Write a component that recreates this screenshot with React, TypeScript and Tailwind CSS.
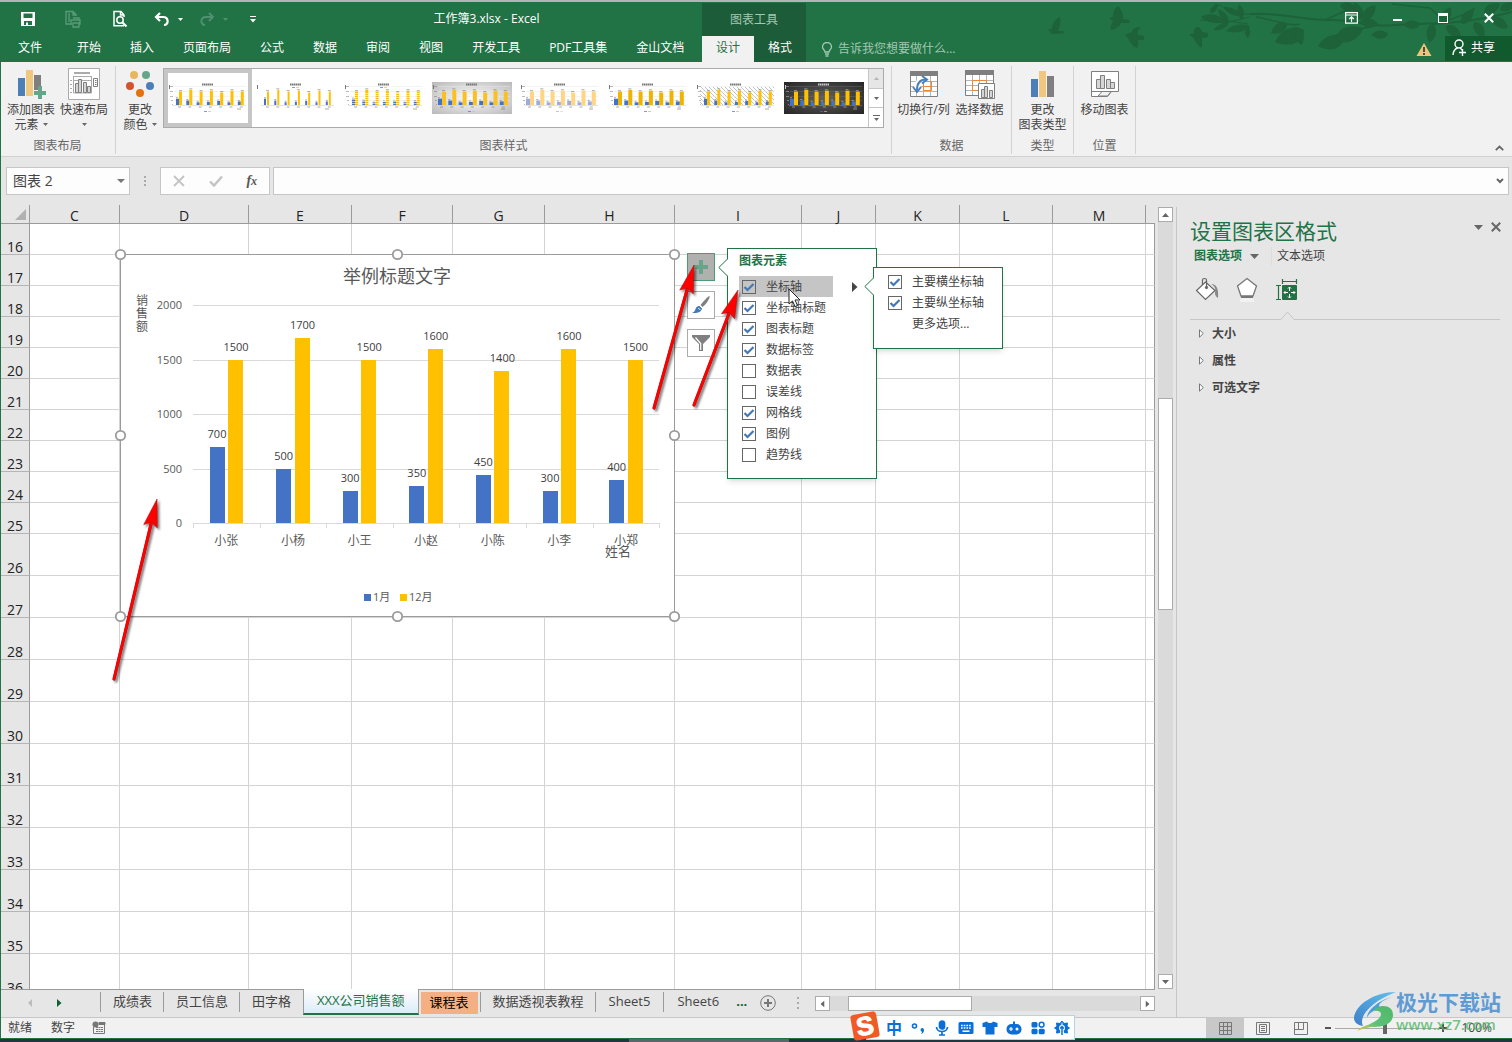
import type { ReactNode } from 'react'

const tabs = ['开始', '插入', '页面布局', '公式', '数据', '审阅', '视图', '开发工具', 'PDF工具集', '金山文档']

const columns = [
  { name: 'C', width: 90 },
  { name: 'D', width: 129 },
  { name: 'E', width: 103 },
  { name: 'F', width: 101 },
  { name: 'G', width: 92 },
  { name: 'H', width: 130 },
  { name: 'I', width: 127 },
  { name: 'J', width: 74 },
  { name: 'K', width: 84 },
  { name: 'L', width: 93 },
  { name: 'M', width: 93 },
]

const rows = Array.from({ length: 21 }, (_, i) => i + 16)

const sales = [
  { name: '小张', jan: 700, dec: 1500 },
  { name: '小杨', jan: 500, dec: 1700 },
  { name: '小王', jan: 300, dec: 1500 },
  { name: '小赵', jan: 350, dec: 1600 },
  { name: '小陈', jan: 450, dec: 1400 },
  { name: '小李', jan: 300, dec: 1600 },
  { name: '小郑', jan: 400, dec: 1500 },
]

const elements = [
  { label: '坐标轴', on: true },
  { label: '坐标轴标题', on: true },
  { label: '图表标题', on: true },
  { label: '数据标签', on: true },
  { label: '数据表', on: false },
  { label: '误差线', on: false },
  { label: '网格线', on: true },
  { label: '图例', on: true },
  { label: '趋势线', on: false },
]

function Caret({ className = 'text-[#666]' }: { className?: string }) {
  return (
    <svg width="5" height="3" viewBox="0 0 5 3" className={`shrink-0 ${className}`}>
      <path d="M0 0h5L2.5 3z" fill="currentColor" />
    </svg>
  )
}

/* ---------- title bar ---------- */

// x, y, rotation, scale of each leaf along the right-hand branches
const leaves = [
  [1287, 23, 150, 0.9], [1304, 30, 160, 1.5], [1296, 27, 75, 0.9], [1344, 38, 165, 1.3],
  [1336, 40, -20, 1.4], [1340, 6, 10, 0.8], [1362, 20, -110, 0.9], [1364, 20, -50, 0.9], [1360, 22, 10, 0.9],
  [1388, 34, 180, 0.8], [1420, 24, 180, 0.8], [1432, 24, 100, 0.9], [1442, 24, -60, 0.9], [1446, 26, 40, 0.9],
  [1462, 24, -50, 0.9], [1474, 22, 60, 0.9], [1484, 14, -30, 0.9], [1492, 18, 35, 0.9], [1500, 10, -20, 0.8],
]

function TitleArt() {
  return (
    <svg className="pointer-events-none absolute right-0 top-0" width="472" height="60" viewBox="1040 2 472 60" fill="#1d6239">
      <g transform="translate(1040 0)">
        <path d="M20 17C15 19 12 24 12 29H8L12 34H17L24 33L23 31H18C20 26 21 22 20 17z" />
        <path d="M78 6C74 9 73 13 73 17L69 18L73 21C71 25 70 28 71 30C76 29 80 26 81 23H90L89 20L83 19C83 14 82 10 78 6z" />
        <path d="M101 27C96 27 92 29 92 32L85 35L88 38C90 43 94 47 97 48C99 45 98 42 98 40H104V36L98 35C97 32 98 29 101 27z" />
        <path d="M157 27C154 27 154 31 154 33L149 35L154 38C155 42 158 46 162 48C162 44 162 41 162 38L168 37V33L162 32C161 29 160 27 157 27z" />
        <path d="M161 17C168 12 178 14 188 22C178 24 168 24 161 17zM178 9C186 12 190 18 188 22C183 20 178 15 178 9zM170 13C170 8 173 5 178 4C178 9 175 13 170 13z" />
        <path d="M183 7C190 6 198 10 202 16C194 17 187 13 183 7zM199 4C205 9 205 15 202 20C197 16 196 9 199 4zM173 30C178 25 183 22 189 22C187 28 180 31 173 30z" />
        <path d="M186 31C192 24 202 23 210 26C206 32 195 34 186 31zM207 26C211 29 211 34 208 38C204 34 204 30 207 26z" />
      </g>
      <g fill="none" stroke="#1d6239">
        <path d="M1214 4L1222 6M1200 20L1228 22L1250 17M1228 21L1248 24M1243 14H1256" />
        <path d="M1250 14C1280 12 1300 20 1330 20S1370 28 1395 25S1450 28 1512 12" strokeWidth="2" />
        <path d="M1256 17C1275 20 1290 27 1300 24M1325 20L1356 6M1330 38C1345 30 1360 28 1372 27M1392 4L1430 8L1445 22M1428 28C1440 20 1460 20 1475 8" strokeWidth="1.500" />
      </g>
      {leaves.map(([x, y, r, s], i) => (
        <path key={i} transform={`translate(${x} ${y}) rotate(${r}) scale(${s})`} d="M0 0C4 -8 13 -8 21 -1C14 6 5 6 0 0z" />
      ))}
    </svg>
  )
}

function QuickAccess() {
  return (
    <div className="flex w-[271px] shrink-0 items-center pl-5 text-white">
      <button aria-label="保存" className="mr-7">
        <svg width="16" height="16" viewBox="0 0 16 16">
          <path d="M1 1h14v14H1z" fill="currentColor" />
          <path d="M3.500 2.500h9V7h-9zM4 10h8v4H4z" fill="#217346" />
          <path d="M6 11.500h2V14H6z" fill="currentColor" />
        </svg>
      </button>
      <button aria-label="快速打印" className="mr-[30px] text-[#5b9a77]">
        <svg width="18" height="18" viewBox="0 0 18 18" fill="none" stroke="currentColor" strokeWidth="1.300">
          <path d="M7 14H2V1.500h7L12 4.500V6M9 1.500V5h3M5 3v9" />
          <path d="M8 10h8v4h-1M8 14H7v-4h1M9 8h6v2M9 13h6v4H9z" />
        </svg>
      </button>
      <button aria-label="打印预览" className="mr-[26px]">
        <svg width="16" height="18" viewBox="0 0 16 18" fill="none" stroke="currentColor" strokeWidth="1.500">
          <path d="M12 15.800H2V1.500h7L12 5v2M8.500 1.500V5H12" />
          <circle cx="8" cy="10" r="3.200" />
          <path d="M10.500 12.500L14.500 16.500" strokeWidth="2.200" />
        </svg>
      </button>
      <button aria-label="撤消" className="flex items-center gap-2">
        <svg width="16" height="15" viewBox="0 0 16 15" fill="none" stroke="currentColor" strokeWidth="2.200">
          <path d="M6 1L2 5l4 4M2 5h7c6 0 6 8 1 8" />
        </svg>
        <Caret className="text-white" />
      </button>
      <button aria-label="恢复" className="ml-4 flex items-center gap-2 text-[#4f9070]">
        <svg width="16" height="15" viewBox="0 0 16 15" fill="none" stroke="currentColor" strokeWidth="2">
          <path d="M10 1l4 4-4 4M14 5H7C1 5 1 13 6 13" />
        </svg>
        <Caret className="text-[#4f9070]" />
      </button>
      <button aria-label="自定义快速访问工具栏" className="ml-[22px]">
        <svg width="6" height="7" viewBox="0 0 6 7" fill="currentColor">
          <path d="M0 0h6v1H0zM0 3h6L3 6.500z" />
        </svg>
      </button>
    </div>
  )
}

function Header() {
  return (
    <header className="relative flex h-[62px] shrink-0 border-t-2 border-[#b4b4b4] bg-[#217346] text-xs text-white">
      <TitleArt />
      <div className="flex w-[702px] shrink-0 flex-col">
        <div className="flex h-[34px]">
          <QuickAccess />
          <h1 className="flex flex-1 items-center justify-center">工作簿3.xlsx - Excel</h1>
        </div>
        <nav className="flex flex-1 items-center gap-[29px] whitespace-nowrap pb-[2px] pl-[18px]">
          <button className="mr-[6px]">文件</button>
          {tabs.map((t) => (
            <button key={t}>{t}</button>
          ))}
        </nav>
      </div>
      <div className="mt-px flex w-[104px] shrink-0 flex-col bg-[#1c5c38]">
        <div className="flex h-[33px] items-center justify-center text-[#a3c7b1]">图表工具</div>
        <div className="flex flex-1">
          <button className="flex-1 bg-[#f1f1f1] pb-[2px] text-[#217346]">设计</button>
          <button className="flex-1 pb-[2px]">格式</button>
        </div>
      </div>
      <div className="relative flex flex-1 flex-col">
        <div className="flex h-8 justify-end">
          <button aria-label="功能区显示选项" className="flex w-[46px] items-center justify-center">
            <svg width="13" height="12" viewBox="0 0 13 12" fill="none" stroke="white" strokeWidth="1.200">
              <path d="M.6 .6h11.800v10.600H.6zM.6 3h11.800M6.500 10V5M4.300 7l2.200-2.200L8.700 7" />
            </svg>
          </button>
          <button aria-label="最小化" className="flex w-[46px] items-center justify-center">
            <span className="mt-1 h-[2px] w-[9px] bg-white" />
          </button>
          <button aria-label="最大化" className="flex w-[46px] items-center justify-center">
            <span className="h-[10px] w-[10px] border border-t-[3px] border-white" />
          </button>
          <button aria-label="关闭" className="flex w-[46px] items-center justify-center">
            <svg width="10" height="10" viewBox="0 0 10 10" stroke="white" strokeWidth="2">
              <path d="M.8 .8l8.400 8.400M9.200 .8L.8 9.200" />
            </svg>
          </button>
        </div>
        <div className="mt-[2px] flex flex-1 items-center pl-[15px]">
          <button className="flex items-center gap-[5px] text-[#a3c7b1]">
            <svg width="12" height="15" viewBox="0 0 12 15" fill="none" stroke="currentColor" strokeWidth="1.300">
              <path d="M4 10C4 8 1.500 7.500 1.500 5a4.500 4.500 0 0 1 9 0C10.500 7.500 8 8 8 10zM4 12h4M4.500 14h3" />
            </svg>
            告诉我您想要做什么...
          </button>
          <svg className="ml-auto mr-[13px]" width="16" height="15" viewBox="0 0 16 15">
            <path d="M8 1L15.500 14H.5z" fill="#eec57c" />
            <path d="M7 5h2v5H7zM7 11h2v2H7z" fill="#5a4a3a" />
          </svg>
          <button className="flex h-full w-[67px] items-center gap-[4px] border-b border-[#217346] bg-[#115a2e] pb-[2px] pl-[7px]">
            <svg width="15" height="17" viewBox="0 0 15 17" fill="none" stroke="white" strokeWidth="1.400">
              <circle cx="7" cy="5" r="4" />
              <path d="M1 16c0-4 2-6 5-7.500M8 9c1.500 1 2 1.500 2.500 2.500M7 13.500h7M10.500 10v7" />
            </svg>
            共享
          </button>
        </div>
      </div>
    </header>
  )
}

/* ---------- ribbon ---------- */

type ThumbStyle = { bg?: string; blue?: string; gold?: string; wide?: boolean; thin?: boolean; hatch?: boolean; stripes?: boolean; topLegend?: boolean; dark?: boolean }

const thumbs: ThumbStyle[] = [
  {},
  { thin: true, topLegend: true },
  { stripes: true, topLegend: true },
  { bg: 'url(#silver)', wide: true, blue: '#4472c4', gold: '#fbc022' },
  { blue: '#9aabdc', gold: '#ffd583', wide: true },
  { gold: '#f0b400', wide: true },
  { hatch: true },
  { bg: 'url(#night)', wide: true, dark: true },
]

function Thumb({ bg = '#fff', blue = '#4472c4', gold = '#ffc000', wide, thin, hatch, stripes, topLegend, dark }: ThumbStyle) {
  const ink = dark ? '#c8c8c8' : '#777'
  const w = thin ? 2 : wide ? 4 : 3
  const start = wide ? 6 : 8
  return (
    <svg width="80" height="32" viewBox="0 0 80 32">
      <rect width="80" height="32" fill={bg} />
      {hatch && <rect x="4" y="5" width="74" height="18" fill="url(#hatch)" />}
      {!thin && <path d="M6 4.500h72M6 9.500h72M6 14.500h72M6 18.500h72" stroke={dark ? '#666' : '#e6e6e6'} strokeWidth=".5" />}
      {!thin && <path d="M2 4.500h3M2 9.500h3M2 14.500h3M3 18.500h2M4 22.500h1" stroke={ink} opacity=".5" />}
      <path d="M5 23.500h73" stroke={dark ? '#888' : '#d0d0d0'} strokeWidth=".6" />
      <path d="M34 2.500h11" stroke={ink} strokeWidth="2" strokeDasharray="1.600 .4" />
      <rect x="1" y="3" width="1" height="4" fill={ink} />
      {sales.map((s, i) => {
        const x = start + i * 10.3
        const hj = s.jan / 112
        const hd = s.dec / 112
        return (
          <g key={s.name}>
            <rect x={x} y={23 - hj} width={w} height={hj} fill={blue} />
            <rect x={x + w + (thin ? 1 : 0)} y={23 - hd} width={w} height={hd} fill={gold} />
            <g fill={ink} opacity=".6">
              <rect x={x} y={21.5 - hj} width="2" height="1" />
              <rect x={x + w} y={21.5 - hd} width="3" height="1" />
              <rect x={x + 2} y="24.500" width="3" height="1" />
            </g>
          </g>
        )
      })}
      {stripes && <path d="M6 11.500h72M6 13.500h72M6 15.500h72M6 17.500h72M6 19.500h72M6 21.500h72" stroke="#fff" strokeWidth=".6" />}
      <rect x="69" y="26.500" width="4" height="1" fill={ink} opacity=".6" />
      <rect x="36" y={topLegend ? 5 : 29} width="3" height="1" fill={blue} opacity=".7" />
      <rect x="40" y={topLegend ? 5 : 29} width="3" height="1" fill={gold} opacity=".7" />
    </svg>
  )
}

function GalleryDefs() {
  return (
    <svg width="0" height="0" className="absolute">
      <defs>
        <radialGradient id="silver" r=".7">
          <stop offset="0" stopColor="#fff" />
          <stop offset="1" stopColor="#b9b9b9" />
        </radialGradient>
        <radialGradient id="night" r=".7">
          <stop offset="0" stopColor="#606060" />
          <stop offset="1" stopColor="#262626" />
        </radialGradient>
        <pattern id="hatch" width="4" height="4" patternUnits="userSpaceOnUse">
          <path d="M0 0l4 4" stroke="#bbb" strokeWidth=".9" />
        </pattern>
      </defs>
    </svg>
  )
}

function Group({ label, className = '', children }: { label: string; className?: string; children: ReactNode }) {
  return (
    <section className={`mb-[2px] mt-1 flex shrink-0 flex-col border-r border-[#d2d2d2] ${className}`}>
      <div className="flex flex-1 justify-center pt-[2px]">{children}</div>
      <h2 className="text-center leading-4 text-[#666]">{label}</h2>
    </section>
  )
}

function BigButton({ icon, lines, caret, className = 'w-14' }: { icon: ReactNode; lines: string[]; caret?: boolean; className?: string }) {
  return (
    <button className={`flex flex-col items-center whitespace-nowrap leading-[15px] ${className}`}>
      <span className="mb-[2px] flex h-8 items-center justify-center">{icon}</span>
      <span>{lines[0]}</span>
      <span className="flex min-h-[15px] items-center gap-1">
        {lines[1]}
        {caret && <Caret />}
      </span>
    </button>
  )
}

const addElementIcon = (
  <svg width="30" height="30" viewBox="0 0 30 30">
    <path d="M2 9h7v18H2z" fill="#4a7fb8" />
    <path d="M10 1h7v26h-7z" fill="#efc77e" />
    <path d="M18 6h7v15h-7z" fill="#7f7f7f" />
    <path d="M22 17h4v5h4v4h-4v4h-4v-4h-4v-4h4z" fill="#67a58b" />
  </svg>
)

const quickLayoutIcon = (
  <svg width="32" height="32" viewBox="0 0 32 32" fill="none" stroke="#7f7f7f">
    <path d="M.5 .5h31v31H.5z" fill="#fff" stroke="#ababab" />
    <path d="M6 5h16" stroke="#ababab" strokeWidth="2" />
    <path d="M5.500 8.500h18M5.500 12.500h18" stroke="#ababab" />
    <path d="M2 12.500h2M2 16.500h2M2 20.500h2M2 24.500h2" stroke="#ababab" />
    <path d="M5.500 8v17h18V8" stroke="#ababab" />
    <path d="M7.500 15.500h3v9h-3zM10.500 11.500h3v13h-3zM15.500 14.500h3v10h-3zM19.500 18.500h3v6h-3z" fill="#d6d6d6" />
    <path d="M25.500 10.500h4v8h-4zM27 12.500h1.500M27 14.500h1.500M27 16.500h1.500" />
  </svg>
)

const colorsIcon = (
  <svg width="30" height="30" viewBox="0 0 30 30">
    <circle cx="9" cy="6" r="4" fill="#e9b660" />
    <circle cx="21" cy="6" r="4" fill="#67a58b" />
    <circle cx="5" cy="17" r="4" fill="#d35230" />
    <circle cx="25" cy="17" r="4" fill="#4a7fb8" />
    <circle cx="15" cy="24" r="4" fill="#e3720f" />
  </svg>
)

const switchIcon = (
  <svg width="30" height="28" viewBox="0 0 30 28" fill="none">
    <path d="M1.500 1.500h27v25h-27z" fill="#fff" stroke="#7f7f7f" />
    <path d="M1 1h28v5H1z" fill="#7f7f7f" />
    <path d="M7.500 6v20M14.500 6v20M21.500 6v20M2 11.500h26M2 16.500h26M2 21.500h26" stroke="#b5b5b5" />
    <path d="M14.500 11.500h8v9h-8zM22.500 16.500h-8" stroke="#ed8733" />
    <path d="M8 20C8 13 11 9.500 17 9.500" stroke="#fff" strokeWidth="6" />
    <path d="M8 20C8 13 11 9.500 17 9.500" stroke="#4a7fb8" strokeWidth="2" />
    <path d="M13 6l5 3.500-5 4M4 17l4 5 4-5" stroke="#4a7fb8" strokeWidth="2" />
  </svg>
)

const selectDataIcon = (
  <svg width="32" height="30" viewBox="0 0 32 30" fill="none">
    <path d="M1.500 1.500h28v25h-28z" fill="#fff" stroke="#7f7f7f" />
    <path d="M1 1h29v5H1z" fill="#7f7f7f" />
    <path d="M8.500 6v20M15.500 6v20M22.500 6v20M2 11.500h27M2 16.500h27M2 21.500h27" stroke="#b5b5b5" />
    <path d="M8.500 11.500h14v10h-14z" stroke="#ed8733" />
    <path d="M14.500 14.500h16v15h-16z" fill="#fff" stroke="#7f7f7f" />
    <path d="M17.500 20.500h3v8h-3zM20.500 17.500h3v11h-3zM25.500 21.500h3v7h-3z" fill="#d6d6d6" stroke="#7f7f7f" />
  </svg>
)

const chartTypeIcon = (
  <svg width="24" height="28" viewBox="0 0 24 28">
    <path d="M0 9h7v18H0z" fill="#4a7fb8" />
    <path d="M8 1h7v26H8z" fill="#efc77e" />
    <path d="M16 6h7v21h-7z" fill="#7f7f7f" />
  </svg>
)

const moveChartIcon = (
  <svg width="28" height="28" viewBox="0 0 28 28" stroke="#7f7f7f" fill="none">
    <path d="M.5 1.500h27v20h-7l-4 5h-16z" fill="#fff" />
    <path d="M7 26l4-4.500h9l-3.500 4.500z" fill="#f1f1f1" />
    <path d="M1 21.500h26" />
    <path d="M5.500 9.500h4v9h-4zM9.500 5.500h4v13h-4zM15.500 9.500h4v9h-4zM19.500 12.500h4v6h-4z" fill="#d6d6d6" />
  </svg>
)

function Ribbon() {
  return (
    <div className="relative flex h-[95px] shrink-0 border-b border-[#d2d2d2] bg-[#f1f1f1] text-xs text-[#444]">
      <GalleryDefs />
      <Group label="图表布局" className="w-[115px] pr-px">
        <BigButton icon={addElementIcon} lines={['添加图表', '元素']} caret className="w-[53px]" />
        <BigButton icon={quickLayoutIcon} lines={['快速布局', '']} caret className="w-[53px]" />
      </Group>
      <Group label="图表样式" className="w-[776px]">
        <div className="flex pr-[6px]">
          <BigButton icon={colorsIcon} lines={['更改', '颜色']} caret className="w-[46px]" />
          <div className="flex h-[60px] border border-[#ababab] bg-white">
            {thumbs.map((t, i) => (
              <button
                key={i}
                aria-label={`样式 ${i + 1}`}
                className={`flex w-[88px] items-center justify-center ${i === 0 ? 'border-4 border-[#c6c6c6]' : ''}`}
              >
                <Thumb {...t} />
              </button>
            ))}
            <div className="flex w-[15px] flex-col border-l border-[#c6c6c6]">
              <button aria-label="上一行" className="flex flex-1 items-center justify-center bg-[#e6e6e6]">
                <Caret className="rotate-180 text-[#b5b5b5]" />
              </button>
              <button aria-label="下一行" className="flex flex-1 items-center justify-center border-y border-[#c6c6c6]">
                <Caret />
              </button>
              <button aria-label="其他" className="flex flex-1 flex-col items-center justify-center gap-[2px]">
                <span className="h-px w-[7px] bg-[#666]" />
                <Caret />
              </button>
            </div>
          </div>
        </div>
      </Group>
      <Group label="数据" className="w-[120px]">
        <BigButton icon={switchIcon} lines={['切换行/列']} />
        <BigButton icon={selectDataIcon} lines={['选择数据']} />
      </Group>
      <Group label="类型" className="w-[62px]">
        <BigButton icon={chartTypeIcon} lines={['更改', '图表类型']} />
      </Group>
      <Group label="位置" className="w-[62px]">
        <BigButton icon={moveChartIcon} lines={['移动图表']} />
      </Group>
      <button aria-label="折叠功能区" className="ml-auto mr-2 self-end pb-[5px]">
        <svg width="9" height="6" viewBox="0 0 9 6" fill="none" stroke="#666" strokeWidth="1.800">
          <path d="M.8 5.200L4.500 1.500l3.700 3.700" />
        </svg>
      </button>
    </div>
  )
}

function FormulaBar() {
  return (
    <div className="flex h-12 shrink-0 items-center pl-[5px] pr-[3px] text-sm text-[#444]">
      <div className="flex h-7 w-[124px] items-center border border-[#c6c6c6] bg-[#fdfdfd] pl-[6px] pr-1">
        <input aria-label="名称框" defaultValue="图表 2" className="w-full min-w-0 bg-transparent outline-none" />
        <svg width="8" height="4" viewBox="0 0 8 4" className="shrink-0">
          <path d="M0 0h8L4 4z" fill="#777" />
        </svg>
      </div>
      <svg width="30" height="12" viewBox="0 0 30 12" fill="#aaa">
        <path d="M14 1h2v2h-2zM14 5h2v2h-2zM14 9h2v2h-2z" />
      </svg>
      <div className="mr-[3px] flex h-7 w-[110px] items-center justify-around border border-[#c6c6c6] bg-[#fdfdfd]">
        <button aria-label="取消">
          <svg width="12" height="12" viewBox="0 0 12 12" stroke="#c3c3c3" strokeWidth="1.800">
            <path d="M1 1l10 10M11 1L1 11" />
          </svg>
        </button>
        <button aria-label="输入">
          <svg width="14" height="12" viewBox="0 0 14 12" fill="none" stroke="#c3c3c3" strokeWidth="2.400">
            <path d="M1 6.500l4 4L13 1.500" />
          </svg>
        </button>
        <button className="font-['Liberation_Serif',serif] font-bold italic leading-none text-[#555]">
          f<span className="text-xs">x</span>
        </button>
      </div>
      <div className="flex h-7 flex-1 items-center border border-[#c6c6c6] bg-[#fdfdfd] pr-1">
        <input aria-label="编辑栏" className="w-full bg-transparent outline-none" />
        <svg width="8" height="6" viewBox="0 0 8 6" fill="none" stroke="#666" strokeWidth="2">
          <path d="M1 1l3 3 3-3" />
        </svg>
      </div>
    </div>
  )
}

/* ---------- worksheet ---------- */

function Grid() {
  return (
    <table className="w-full table-fixed border-separate border-spacing-0 bg-white text-sm text-[#222]">
      <colgroup>
        <col style={{ width: 29 }} />
        {columns.map((c) => (
          <col key={c.name} style={{ width: c.width }} />
        ))}
        <col />
      </colgroup>
      <thead>
        <tr className="h-[19px] bg-[#e6e6e6]">
          <th className="border-b border-r border-[#9b9b9b] p-0">
            <svg width="11" height="11" viewBox="0 0 11 11" className="ml-auto mr-[3px]">
              <path d="M11 0v11H0z" fill="#b1b1b1" />
            </svg>
          </th>
          {columns.map((c) => (
            <th key={c.name} scope="col" className="border-b border-r border-[#9b9b9b] p-0 align-bottom font-normal leading-[14px]">
              {c.name}
            </th>
          ))}
          <th className="border-b border-[#9b9b9b] p-0" />
        </tr>
      </thead>
      <tbody>
        {rows.map((r) => (
          <tr key={r} className={r < 26 ? 'h-[31px]' : 'h-[42px]'}>
            <th scope="row" className="border-b border-r border-b-[#b5b5b5] border-r-[#9b9b9b] bg-[#e6e6e6] p-0 align-bottom font-normal leading-[14px]">
              {r}
            </th>
            {columns.map((c) => (
              <td key={c.name} className="border-b border-r border-[#d4d4d4] p-0" />
            ))}
            <td className="border-b border-r border-b-[#d4d4d4] border-r-[#9b9b9b] p-0" />
          </tr>
        ))}
      </tbody>
    </table>
  )
}

function SalesChart() {
  const base = 523
  const scale = 0.109
  const step = 66.6
  return (
    <svg className="absolute left-[113px] top-[43px] text-[11px]" width="568" height="376" viewBox="114 248 568 376" textAnchor="middle">
      <rect x="120.500" y="254.500" width="554" height="362" fill="#fff" stroke="#9b9b9b" />
      <text x="397" y="283" fill="#595959" className="text-lg">举例标题文字</text>
      <g fill="#595959" className="text-xs">
        <text x="142" y="305">销</text>
        <text x="142" y="318">售</text>
        <text x="142" y="331">额</text>
      </g>
      {[0, 500, 1000, 1500, 2000].map((v) => {
        const y = Math.round(base - v * scale) + 0.5
        return (
          <g key={v}>
            <path d={`M193 ${y}H659`} stroke="#d9d9d9" />
            <text x="182" y={y + 3.5} fill="#595959" textAnchor="end">{v}</text>
          </g>
        )
      })}
      {Array.from({ length: 8 }, (_, i) => (
        <path key={i} d={`M${Math.round(193 + i * step) + 0.5} 523v5`} stroke="#d9d9d9" />
      ))}
      {sales.map((s, i) => {
        const x = 193 + i * step
        const jan = Math.round(base + 0.8 - s.jan * scale)
        const dec = Math.round(base + 0.8 - s.dec * scale)
        return (
          <g key={s.name} fill="#404040">
            <rect x={Math.round(x + 16.6)} y={jan} width="15" height={base - jan} fill="#4472c4" />
            <rect x={Math.round(x + 35)} y={dec} width="15" height={base - dec} fill="#ffc000" />
            <text x={x + 24} y={jan - 9}>{s.jan}</text>
            <text x={x + 43} y={dec - 9}>{s.dec}</text>
            <text x={x + 33.3} y="545" fill="#595959" className="text-xs">{s.name}</text>
          </g>
        )
      })}
      <text x="618" y="556" fill="#595959" className="text-[13px]">姓名</text>
      <path d="M364 594h7v7h-7z" fill="#4472c4" />
      <path d="M400 594h7v7h-7z" fill="#ffc000" />
      <g fill="#595959" textAnchor="start">
        <text x="373" y="601">1月</text>
        <text x="409" y="601">12月</text>
      </g>
      {[[120.5, 254.5], [397.5, 254.5], [674.5, 254.5], [120.5, 435.5], [674.5, 435.5], [120.5, 616.5], [397.5, 616.5], [674.5, 616.5]].map(([cx, cy]) => (
        <circle key={`${cx}-${cy}`} cx={cx} cy={cy} r="4.700" fill="#fff" stroke="#9b9b9b" strokeWidth="1.800" />
      ))}
    </svg>
  )
}

function Check({ label, on }: { label: string; on: boolean }) {
  return (
    <label className="flex h-[21px] items-center gap-[10px] whitespace-nowrap">
      <span className="grid">
        <input type="checkbox" defaultChecked={on} className="peer col-start-1 row-start-1 h-[14px] w-[14px] appearance-none border border-[#666]" />
        <svg width="14" height="14" viewBox="0 0 14 14" fill="none" stroke="#4178b5" strokeWidth="2.200" className="pointer-events-none invisible col-start-1 row-start-1 peer-checked:visible">
          <path d="M2.500 7l3 3 6-6" />
        </svg>
      </span>
      {label}
    </label>
  )
}

function Pointer({ className }: { className: string }) {
  return (
    <svg width="10" height="19" viewBox="0 0 10 19" className={`absolute ${className}`}>
      <path d="M10 .5L.8 9.500l9.200 9" fill="#fff" stroke="#217346" />
    </svg>
  )
}

function ChartTools() {
  return (
    <>
      <div className="absolute left-[686px] top-12 flex flex-col gap-[10px]">
        <button aria-label="图表元素" className="flex h-7 w-7 items-center justify-center border border-[#4d9b74] bg-[#b0b0b0]">
          <svg width="14" height="14" viewBox="0 0 14 14"><path d="M5 0h4v5h5v4H9v5H5V9H0V5h5z" fill="#67a58b" /></svg>
        </button>
        <button aria-label="图表样式" className="flex h-7 w-7 items-center justify-center border border-[#ababab] bg-white">
          <svg width="20" height="20" viewBox="0 0 20 20">
            <path d="M18.500 1c1 2-4 9-7 11l-2-2C12 7 17 1 18.500 1z" fill="#7f7f7f" />
            <path d="M8.500 11l2.500 2.500c-1 4-5 5-10 4.500 3-1 3-3 4-5 1-1.500 2-2 3.500-2z" fill="#4178b5" />
            <path d="M7 13.500c1 0 2 .5 2 1.500" stroke="#fff" fill="none" />
          </svg>
        </button>
        <button aria-label="图表筛选器" className="flex h-7 w-7 items-center justify-center border border-[#ababab] bg-white">
          <svg width="20" height="18" viewBox="0 0 20 18">
            <path d="M1 1h18v2l-7 7v7H8v-7L1 3z" fill="#7f7f7f" />
            <path d="M9.700 16v-6.500L4.500 3.500" stroke="#fff" strokeWidth="1.200" fill="none" />
          </svg>
        </button>
      </div>
      <div className="absolute left-[726px] top-[43px] h-[231px] w-[150px] border border-[#217346] bg-white pl-[11px] pt-[4px] text-xs text-[#444] shadow-md">
        <Pointer className="-left-[10px] top-[9px]" />
        <h3 className="mb-[7px] leading-4 font-bold text-[#217346]">图表元素</h3>
        {elements.map((e, i) => (
          <div key={e.label} className="flex items-center">
            <div className={`w-[94px] pl-[3px] ${i === 0 ? 'bg-[#c5c5c5]' : ''}`}>
              <Check {...e} />
            </div>
            {i === 0 && (
              <svg width="6" height="10" viewBox="0 0 6 10" className="ml-[19px]"><path d="M0 0l5.500 5L0 10z" fill="#444" /></svg>
            )}
          </div>
        ))}
      </div>
      <div className="absolute left-[872px] top-[62px] h-[82px] w-[130px] border border-[#217346] bg-white pl-[14px] pt-[3px] text-xs text-[#444] shadow-md">
        <Pointer className="-left-[10px] top-[9px]" />
        <Check label="主要横坐标轴" on />
        <Check label="主要纵坐标轴" on />
        <button className="ml-6 block leading-[21px]">更多选项...</button>
      </div>
      <svg className="pointer-events-none absolute left-[787px] top-[83px]" width="14" height="20" viewBox="0 0 14 20">
        <path d="M1 1v15l3.500-3 2.500 5.500 2.500-1L7 12h5z" fill="#fff" stroke="#222" />
      </svg>
    </>
  )
}

const arrows = [
  { x: 157, y: 499, fromX: 114, fromY: 679 },
  { x: 694, y: 265, fromX: 654, fromY: 408 },
  { x: 738, y: 290, fromX: 694, fromY: 405 },
]

function Arrows() {
  return (
    <svg className="pointer-events-none absolute left-0 top-0 drop-shadow-[2px_2px_1px_rgba(0,0,0,0.5)]" width="800" height="520" viewBox="1 205 800 520">
      {arrows.map((a) => {
        const dx = a.fromX - a.x
        const dy = a.fromY - a.y
        const len = Math.hypot(dx, dy)
        const angle = (Math.atan2(dy, dx) * 180) / Math.PI
        return (
          <g key={a.x} transform={`translate(${a.x} ${a.y}) rotate(${angle})`}>
            <path d={`M22 0H${len}`} stroke="#b01010" strokeWidth="3.200" strokeLinecap="round" />
            <path d={`M22 0H${len}`} stroke="#f00" strokeWidth="2.600" strokeLinecap="round" />
            <path d="M0 0L28 -7L24 0L28 7z" fill="#f00" stroke="#b01010" strokeWidth=".5" />
          </g>
        )
      })}
    </svg>
  )
}

function ScrollButton({ label, turn, className = '' }: { label: string; turn: string; className?: string }) {
  return (
    <button aria-label={label} className={`flex h-[15px] w-[15px] shrink-0 items-center justify-center border border-[#ababab] bg-white ${className}`}>
      <svg width="7" height="4" viewBox="0 0 7 4" className={`shrink-0 ${turn}`}><path d="M0 0h7L3.500 4z" fill="#666" /></svg>
    </button>
  )
}

function SheetTabs() {
  const plain = 'h-5 border-r border-[#9b9b9b] pl-3 pr-[11px]'
  return (
    <div className="flex h-7 shrink-0 items-start whitespace-nowrap text-[13px] text-[#444]">
      <div className="flex h-7 flex-1 items-start border-t border-[#9b9b9b]">
        <div className="flex h-[26px] w-[99px] shrink-0 items-center pl-[27px]">
          <svg width="4" height="8" viewBox="0 0 4 8" className="mr-[25px]"><path d="M4 0v8L0 4z" fill="#bbb" /></svg>
          <svg width="5" height="8" viewBox="0 0 5 8"><path d="M0 0v8l4.500-4z" fill="#0c6132" /></svg>
        </div>
        <div className="flex items-start pt-[2px]">
          <button className={`${plain} border-l`}>成绩表</button>
          <button className={plain}>员工信息</button>
          <button className="h-5 px-3">田字格</button>
          <button className="-mt-[3px] h-[26px] border-x border-b-2 border-x-[#9b9b9b] border-b-[#217346] bg-gradient-to-b from-white to-[#dcebf8] px-[13px] text-[#217346]">
            XXX公司销售额
          </button>
          <button className="mx-[2px] h-[22px] bg-[#f4b084] px-[9px] text-black">课程表</button>
          <button className={`${plain} border-l`}>数据透视表教程</button>
          <button className="h-5 border-r border-[#9b9b9b] px-[13px]">Sheet5</button>
          <button className="h-5 px-[13px]">Sheet6</button>
        </div>
        <span className="ml-1 mt-[2px] font-bold text-[#0c6132]">...</span>
        <button aria-label="新工作表" className="ml-[13px] mt-[5px]">
          <svg width="16" height="16" viewBox="0 0 16 16" fill="none" stroke="#777">
            <circle cx="8" cy="8" r="7.300" />
            <path d="M8 4v8M4 8h8" strokeWidth="2" />
          </svg>
        </button>
        <svg width="4" height="12" viewBox="0 0 4 12" fill="#aaa" className="ml-[20px] mt-[7px]">
          <path d="M1 0h2v2H1zM1 5h2v2H1zM1 10h2v2H1z" />
        </svg>
        <div className="ml-auto mt-[6px] flex h-[15px] w-[340px] bg-[#dadada]">
          <ScrollButton label="向左滚动" turn="rotate-90" />
          <div className="ml-[18px] w-[124px] border border-[#ababab] bg-white" />
          <ScrollButton label="向右滚动" turn="-rotate-90" className="ml-auto" />
        </div>
      </div>
      <div className="w-[21px]" />
    </div>
  )
}

function FormatPane() {
  return (
    <aside className="mt-[2px] w-[336px] shrink-0 border-l border-[#c6c6c6] pl-[13px] pr-3 text-xs text-[#444]">
      <div className="flex pt-[9px]">
        <h2 className="flex-1 text-[21px] leading-[30px] text-[#217346]">设置图表区格式</h2>
        <button aria-label="任务窗格选项" className="mb-2 mr-2">
          <svg width="9" height="5" viewBox="0 0 9 5"><path d="M0 0h9L4.500 5z" fill="#666" /></svg>
        </button>
        <button aria-label="关闭" className="mb-2 -mr-px">
          <svg width="10" height="10" viewBox="0 0 10 10" stroke="#666" strokeWidth="2"><path d="M.8 .8l8.400 8.400M9.200 .8L.8 9.200" /></svg>
        </button>
      </div>
      <div className="flex items-center pl-1 pt-px leading-[18px]">
        <button className="flex items-center gap-2 font-bold text-[#217346]">
          图表选项
          <svg width="9" height="5" viewBox="0 0 9 5"><path d="M0 0h9L4.500 5z" fill="#666" /></svg>
        </button>
        <button className="ml-3 border-l border-[#dcdcdc] pl-[5px]">文本选项</button>
      </div>
      <div className="mb-px mt-[11px] flex gap-3 pl-[3px]">
        <button aria-label="填充与线条">
          <svg width="28" height="28" viewBox="0 0 28 28" fill="none" stroke="#666">
            <path d="M18 8c5 0 8 4 7 14-2-1-3-3-3-5 1-4 0-7-4-9z" fill="#888" stroke="none" />
            <path d="M12.500 6L22 14.500 12.500 23.500 3.500 14.500z" fill="#fff" strokeWidth="1.200" />
            <path d="M9.500 9V4c0-2 4-2 4 0v7" strokeWidth="1.200" />
            <circle cx="13.500" cy="11.500" r="1.200" fill="#666" />
          </svg>
        </button>
        <button aria-label="效果">
          <svg width="28" height="28" viewBox="0 0 28 28" fill="none" stroke="#777">
            <path d="M14 2.500l9.500 7.500-3.500 10H8L4.500 10z" fill="#fff" strokeWidth="1.300" />
            <path d="M8 21h12" strokeWidth="2" />
            <path d="M8 22h12l1.500 4h-15z" fill="#f2f2f2" stroke="none" />
          </svg>
        </button>
        <button aria-label="大小与属性">
          <svg width="28" height="28" viewBox="0 0 28 28" fill="none" stroke="#217346" strokeWidth="1.200">
            <rect x="9" y="9" width="15" height="15" rx="1" fill="#217346" stroke="none" />
            <path d="M9.500 3v5M23.500 3v5M9.500 5.500h14M3 9.500h5M3 23.500h5M5.500 9.500v14" />
            <path d="M16.500 11v4M16.500 18v4M11 16.500h4M18 16.500h4M15 12.500l1.500-1.500 1.500 1.500M15 20.500l1.500 1.500 1.500-1.500M12.500 15L11 16.500l1.500 1.500M20.500 15l1.500 1.500-1.500 1.500" stroke="#fff" strokeWidth="1" />
          </svg>
        </button>
      </div>
      <div className="flex h-[15px]">
        <div className="w-[91px] border-b border-[#c6c6c6]" />
        <svg width="13" height="15" viewBox="0 0 13 15" fill="none" stroke="#c6c6c6"><path d="M0 14.500L6.500 7l6.500 7.500" /></svg>
        <div className="flex-1 border-b border-[#c6c6c6]" />
      </div>
      {['大小', '属性', '可选文字'].map((t) => (
        <button key={t} className="flex h-[27px] items-center gap-2 pl-[9px] font-bold">
          <svg width="5" height="9" viewBox="0 0 5 9" fill="#fff" stroke="#777"><path d="M.5 .8v7.400L4.300 4.500z" /></svg>
          {t}
        </button>
      ))}
    </aside>
  )
}

/* ---------- bottom bars ---------- */

function StatusBar() {
  return (
    <footer className="flex h-[22px] shrink-0 items-center border-b border-t border-b-[#217346] border-t-[#c6c6c6] bg-[#f1f1f1] text-xs text-[#444]">
      <span className="ml-[7px]">就绪</span>
      <span className="ml-[19px]">数字</span>
      <svg className="ml-[17px]" width="14" height="14" viewBox="0 0 14 14" fill="none" stroke="#777">
        <path d="M1.500 6v6.500h11v-10H7" />
        <path d="M7 1.500h6v2H7z" fill="#777" />
        <path d="M4 6.500h7M4 8.500h7M4 10.500h7" strokeDasharray="2 .5" />
        <circle cx="3.500" cy="3.500" r="3" fill="#777" stroke="none" />
      </svg>
      <button aria-label="普通" className="ml-auto flex h-full w-[38px] items-center justify-center bg-[#c8c8c8]">
        <svg width="13" height="13" viewBox="0 0 13 13" fill="none" stroke="#777"><path d="M.5 .5h12v12H.5zM.5 4.500h12M.5 8.500h12M4.500 .5v12M8.500 .5v12" /></svg>
      </button>
      <button aria-label="页面布局" className="flex h-full w-[38px] items-center justify-center">
        <svg width="14" height="13" viewBox="0 0 14 13" fill="none" stroke="#777"><path d="M.5 .5h13v12H.5zM3.500 2.500h7v8h-7zM5 4.500h4M5 6.500h4M5 8.500h4" /></svg>
      </button>
      <button aria-label="分页预览" className="flex h-full w-[38px] items-center justify-center">
        <svg width="14" height="13" viewBox="0 0 14 13" fill="none" stroke="#777"><path d="M.5 .5h13v12H.5zM4.500 .5v7M9.500 .5v7M.5 7.500h9" /></svg>
      </button>
      <button aria-label="缩小" className="ml-[5px] h-[2px] w-[6px] bg-[#555]" />
      <svg className="ml-1" width="104" height="12" viewBox="0 0 104 12">
        <path d="M0 6.500h104" stroke="#aaa" />
        <path d="M48 1h4v11h-4z" fill="#666" />
      </svg>
      <button aria-label="放大">
        <svg width="8" height="8" viewBox="0 0 8 8"><path d="M3 0h2v3h3v2H5v3H3V5H0V3h3z" fill="#555" /></svg>
      </button>
      <span className="ml-[14px] mr-5">100%</span>
    </footer>
  )
}

function InputMethodBar() {
  return (
    <div className="absolute bottom-[2px] left-[866px] flex h-[25px] items-center border border-[#b5d3f0] bg-white text-[#0a6fd8]">
      <svg width="34" height="32" viewBox="0 0 34 32" className="-ml-[19px] -mt-[3px] shrink-0">
        <g transform="rotate(-10 17 16)">
          <rect x="4" y="3" width="26" height="26" rx="3" fill="#f15a24" />
          <text x="17" y="25" textAnchor="middle" fill="#fff" stroke="#fff" className="font-['Liberation_Sans',sans-serif] text-[26px] font-bold leading-none">S</text>
        </g>
      </svg>
      <div className="flex w-[192px] items-center justify-around">
        <span className="w-4 text-base font-bold leading-none">中</span>
        <svg width="16" height="16" viewBox="0 0 16 16" fill="currentColor">
          <circle cx="4.500" cy="6" r="2" fill="none" stroke="currentColor" strokeWidth="1.600" />
          <path d="M11 8.500a1.800 1.800 0 0 1 3 1.500c0 2-1 3.500-3 4 .8-1 1-1.700 1-2.200-1.500-.3-1.800-2-1-3.300z" />
        </svg>
        <svg width="16" height="16" viewBox="0 0 16 16" fill="none" stroke="currentColor" strokeWidth="1.700">
          <rect x="5.500" y="1" width="5" height="8" rx="2.500" fill="currentColor" />
          <path d="M2.500 7c0 6 11 6 11 0M8 11.500v3.500M5 15h6" />
        </svg>
        <svg width="16" height="16" viewBox="0 0 16 16">
          <rect x=".5" y="2" width="15" height="12" rx="1.500" fill="currentColor" />
          <path d="M3 5.500h10M3 8h10" stroke="#fff" strokeWidth="1.500" strokeDasharray="1.700 1" />
          <path d="M4.500 11.200h7" stroke="#fff" strokeWidth="1.500" />
        </svg>
        <svg width="16" height="16" viewBox="0 0 16 16" fill="currentColor">
          <path d="M5 1.500c1 2 5 2 6 0L15.500 3v4H12.500v7.500h-9V7H.5V3z" />
        </svg>
        <svg width="16" height="16" viewBox="0 0 16 16">
          <path d="M8 1.500v4" stroke="currentColor" strokeWidth="2" />
          <rect x=".5" y="4" width="15" height="10.500" rx="5" fill="currentColor" />
          <path d="M3 9h4M5 7v4" stroke="#fff" strokeWidth="1.200" />
          <circle cx="11" cy="9" r="1.500" fill="#fff" />
        </svg>
        <svg width="16" height="16" viewBox="0 0 16 16" fill="currentColor">
          <rect x="1.500" y="2" width="6" height="5.500" rx="1.500" />
          <rect x="1.500" y="8.700" width="6" height="5.500" rx="1.500" />
          <rect x="8.700" y="8.700" width="6" height="5.500" rx="1.500" />
          <circle cx="11.600" cy="4.700" r="2.400" fill="none" stroke="currentColor" strokeWidth="1.500" />
        </svg>
        <svg width="16" height="16" viewBox="0 0 16 16" fill="none" stroke="currentColor">
          <path d="M8 1l2 2.500 3.500-.5-.5 3.300L15.500 8 13 9.700l.5 3.300-3.500-.5M8 1L6 3.500 2.500 3 3 6.300.5 8 3 9.700 2.500 13l3.500-.5" strokeWidth="1" fill="currentColor" />
          <circle cx="8" cy="8" r="3" fill="#fff" stroke="none" />
          <path d="M8 15V7M6 8.500l2-2 2 2" strokeWidth="1.500" />
        </svg>
      </div>
    </div>
  )
}

function Watermark() {
  return (
    <div className="pointer-events-none absolute bottom-[7px] right-[10px] flex">
      <svg width="44" height="42" viewBox="0 0 44 42" className="-mr-[2px]">
        <defs>
          <linearGradient id="sky" x1="0" y1="1" x2="1" y2="0">
            <stop offset="0" stopColor="#3f7fc8" />
            <stop offset="1" stopColor="#5fc0ee" />
          </linearGradient>
          <linearGradient id="lime" x1="0" y1="1" x2="1" y2="0">
            <stop offset="0" stopColor="#e8c94a" />
            <stop offset=".4" stopColor="#5cc178" />
            <stop offset="1" stopColor="#4fb867" />
          </linearGradient>
        </defs>
        <path d="M42 1C20 1 1 14 0 27c0 4 3 7 9 8-5-10 9-25 33-34z" fill="url(#sky)" />
        <path d="M38 6C23 10 13 20 13 27c1-4 7-9 16-10-8-1-3-7 9-11z" fill="#4b9ddd" />
        <path d="M29 15c6 0 10 3 10 9 0 9-10 12-19 12-7 0-11 2-17 4 5-5 9-5 13-7 6-3 11-6 11-10 0-3-4-4-8-3 3-3 6-5 10-5z" fill="url(#lime)" />
      </svg>
      <div className="w-[106px] whitespace-nowrap">
        <div className="text-[21px] font-bold leading-[22px] text-[#5f9bd3]">极光下载站</div>
        <div className="text-[15px] font-semibold leading-[22px] text-[#4fb867]/80">www.xz7.com</div>
      </div>
    </div>
  )
}

export default function App() {
  return (
    <div className="relative flex h-screen flex-col overflow-hidden bg-[#e6e6e6] font-['Open_Sans','Noto_Sans_CJK_SC',sans-serif]">
      <Header />
      <div className="flex min-h-0 flex-1 flex-col border-l border-[#217346]">
        <Ribbon />
        <FormulaBar />
        <main className="flex min-h-0 flex-1">
          <div className="flex min-w-0 flex-1 flex-col">
            <div className="flex min-h-0 flex-1">
              <div className="relative min-w-0 flex-1 overflow-hidden">
                <Grid />
                <SalesChart />
                <ChartTools />
                <Arrows />
              </div>
              <div className="ml-[3px] mr-[3px] mt-[2px] flex w-[15px] flex-col bg-[#dadada]">
                <ScrollButton label="向上滚动" turn="rotate-180" />
                <div className="grow-[177]" />
                <div className="grow-[211] border border-[#ababab] bg-white" />
                <div className="grow-[366]" />
                <ScrollButton label="向下滚动" turn="" />
              </div>
            </div>
            <SheetTabs />
          </div>
          <FormatPane />
        </main>
        <StatusBar />
      </div>
      <div className="flex h-[3px] shrink-0 justify-center bg-[#22363f]">
        <div className="ml-[-94px] w-40 bg-[#5b666b]" />
      </div>
      <InputMethodBar />
      <Watermark />
    </div>
  )
}
